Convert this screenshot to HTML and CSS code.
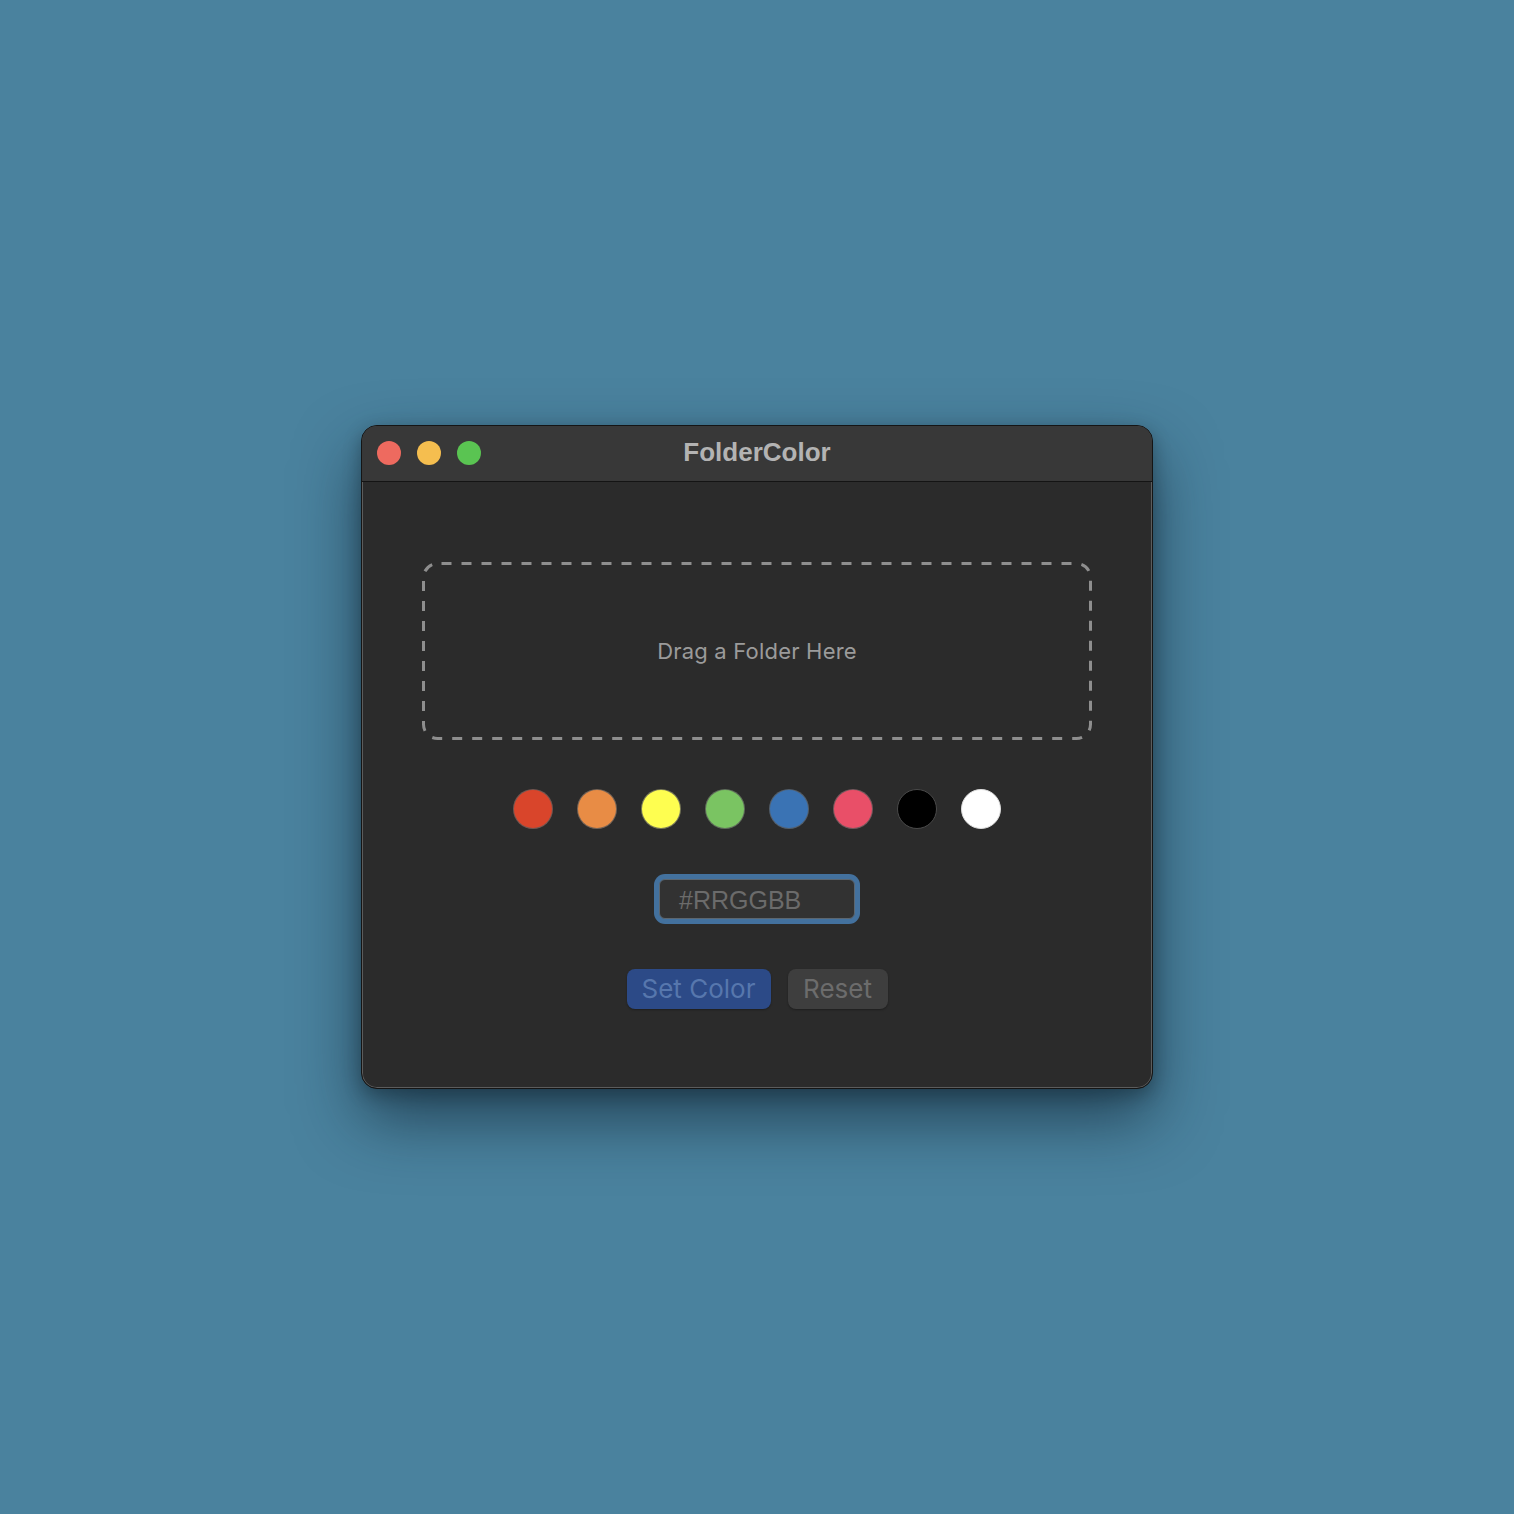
FILE: index.html
```html
<!DOCTYPE html>
<html>
<head>
<meta charset="utf-8">
<link rel="stylesheet" href="styles.css">
</head>
<body>
<div class="desktop">
  <div class="window">
    <div class="titlebar">
      <div class="lights">
        <span class="light red"></span>
        <span class="light yellow"></span>
        <span class="light green"></span>
      </div>
      <div class="title">FolderColor</div>
    </div>
    <div class="content">
      <div class="dropzone">
        <svg class="dash" width="670" height="178" viewBox="0 0 670 178">
          <rect x="1.5" y="1.5" width="667" height="175" rx="14" ry="14" fill="none" stroke="#8e8e8e" stroke-width="3" stroke-dasharray="10 10" stroke-dashoffset="-4"/>
        </svg>
        <span class="drop-label">Drag a Folder Here</span>
      </div>
      <div class="swatches">
        <span class="swatch s-red"></span>
        <span class="swatch s-orange"></span>
        <span class="swatch s-yellow"></span>
        <span class="swatch s-green"></span>
        <span class="swatch s-blue"></span>
        <span class="swatch s-pink"></span>
        <span class="swatch s-black"></span>
        <span class="swatch s-white"></span>
      </div>
      <div class="field">#RRGGBB</div>
      <div class="buttons">
        <div class="btn btn-primary">Set Color</div>
        <div class="btn btn-secondary">Reset</div>
      </div>
    </div>
  </div>
</div>
</body>
</html>
```

FILE: styles.css
```css
html, body {
  margin: 0;
  padding: 0;
}
body {
  background: #4a829e;
  font-family: "Liberation Sans", Arial, sans-serif;
}
.desktop {
  width: 1514px;
  height: 1514px;
  display: flex;
  align-items: center;
  justify-content: center;
}
.window {
  width: 792px;
  height: 664px;
  box-sizing: border-box;
  border: 1px solid #151515;
  border-radius: 16px;
  background: #2b2b2b;
  box-shadow: inset 0 0 0 1px #5c5c5c, 0 30px 64px rgba(15, 35, 50, 0.65), 0 6px 18px rgba(0, 0, 0, 0.3);
  overflow: hidden;
  display: flex;
  flex-direction: column;
}
.titlebar {
  height: 55px;
  flex: none;
  background: #383838;
  border-bottom: 1px solid #141414;
  position: relative;
  display: flex;
  align-items: center;
  justify-content: center;
}
.lights {
  position: absolute;
  left: 15px;
  top: 15px;
  display: flex;
  gap: 16px;
}
.light {
  width: 24px;
  height: 24px;
  border-radius: 50%;
  display: block;
}
.red { background: #ee6a5f; }
.yellow { background: #f5be4f; }
.green { background: #5ac452; }
.title {
  font-weight: bold;
  font-size: 26px;
  color: #b3b3b3;
  margin-top: -2px;
}
.content {
  flex: 1;
  display: flex;
  flex-direction: column;
  align-items: center;
  padding-top: 80px;
  gap: 49px;
}
.dropzone {
  width: 670px;
  height: 178px;
  position: relative;
  display: flex;
  align-items: center;
  justify-content: center;
}
.dash {
  position: absolute;
  left: 0;
  top: 0;
}
.drop-label {
  font-size: 22px;
  letter-spacing: 0.2px;
  color: #9b9b9b;
  font-family: "Inter", "Liberation Sans", sans-serif;
}
.swatches {
  display: flex;
  gap: 24px;
  height: 40px;
}
.swatch {
  width: 40px;
  height: 40px;
  box-sizing: border-box;
  border-radius: 50%;
  border: 1px solid rgba(90, 90, 90, 0.8);
  display: block;
}
.s-red { background: #d9452b; }
.s-orange { background: #e88c45; }
.s-yellow { background: #fefe50; }
.s-green { background: #7ac462; }
.s-blue { background: #3a73b4; }
.s-pink { background: #e94f68; }
.s-black { background: #000000; border-color: #4a4a4a; }
.s-white { background: #ffffff; border-color: #dddddd; }
.field {
  width: 196px;
  height: 40px;
  box-sizing: border-box;
  border: 1px solid #5b6670;
  border-radius: 6px;
  background: #323232;
  box-shadow: 0 0 0 5px #43719e;
  color: #6b6b6b;
  font-size: 25px;
  line-height: 40px;
  padding-left: 19px;
  margin-top: 1px;
}
.buttons {
  display: flex;
  gap: 17px;
  margin-top: 1px;
}
.btn {
  height: 40px;
  box-sizing: border-box;
  border-radius: 8px;
  font-family: "Inter", "Liberation Sans", sans-serif;
  font-size: 26px;
  line-height: 40px;
  text-align: center;
  box-shadow: 0 1px 2px rgba(0, 0, 0, 0.3);
}
.btn-primary {
  width: 144px;
  background: #2c4a87;
  color: #5777ad;
}
.btn-secondary {
  width: 100px;
  background: #3e3e3e;
  color: #6c6c6c;
}
```
